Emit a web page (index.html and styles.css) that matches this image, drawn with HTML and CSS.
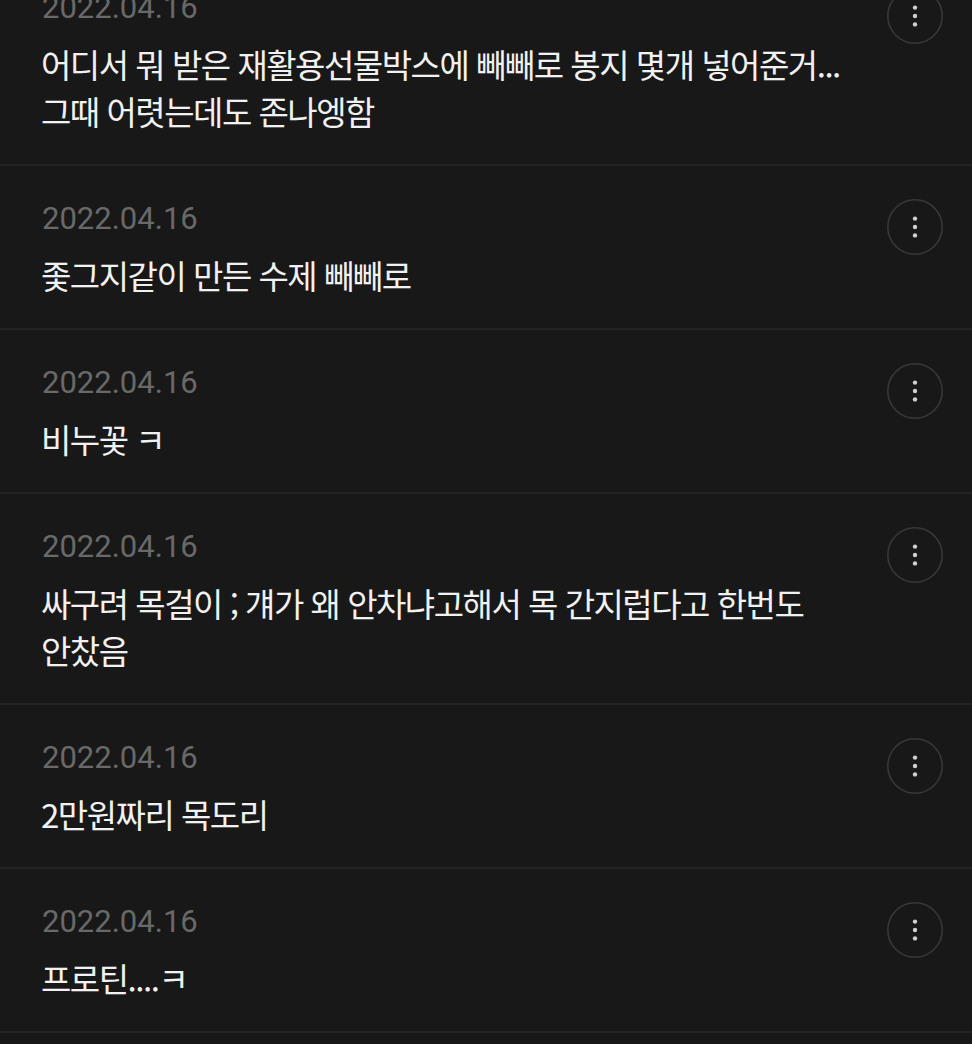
FILE: index.html
```html
<!DOCTYPE html>
<html lang="ko">
<head>
<meta charset="utf-8">
<title>댓글</title>
<link rel="stylesheet" href="styles.css">
</head>
<body>
<ul class="list">
  <li class="item">
    <div class="body">
      <div class="date">2022.04.16</div>
      <p class="text">어디서 뭐 받은 재활용선물박스에 빼빼로 봉지 몇개 넣어준거... 그때 어렷는데도 존나엥함</p>
    </div>
    <button class="more" aria-label="더보기"><svg width="56" height="56" viewBox="0 0 56 56"><circle cx="28" cy="28" r="27.2" fill="none" stroke="#383838" stroke-width="1.6"/><circle cx="28" cy="19.6" r="2.2" fill="#cfcfcf"/><circle cx="28" cy="28" r="2.2" fill="#cfcfcf"/><circle cx="28" cy="36.4" r="2.2" fill="#cfcfcf"/></svg></button>
  </li>
  <li class="item">
    <div class="body">
      <div class="date">2022.04.16</div>
      <p class="text">좇그지같이 만든 수제 빼빼로</p>
    </div>
    <button class="more" aria-label="더보기"><svg width="56" height="56" viewBox="0 0 56 56"><circle cx="28" cy="28" r="27.2" fill="none" stroke="#383838" stroke-width="1.6"/><circle cx="28" cy="19.6" r="2.2" fill="#cfcfcf"/><circle cx="28" cy="28" r="2.2" fill="#cfcfcf"/><circle cx="28" cy="36.4" r="2.2" fill="#cfcfcf"/></svg></button>
  </li>
  <li class="item">
    <div class="body">
      <div class="date">2022.04.16</div>
      <p class="text">비누꽃 ㅋ</p>
    </div>
    <button class="more" aria-label="더보기"><svg width="56" height="56" viewBox="0 0 56 56"><circle cx="28" cy="28" r="27.2" fill="none" stroke="#383838" stroke-width="1.6"/><circle cx="28" cy="19.6" r="2.2" fill="#cfcfcf"/><circle cx="28" cy="28" r="2.2" fill="#cfcfcf"/><circle cx="28" cy="36.4" r="2.2" fill="#cfcfcf"/></svg></button>
  </li>
  <li class="item">
    <div class="body">
      <div class="date">2022.04.16</div>
      <p class="text">싸구려 목걸이 ; 걔가 왜 안차냐고해서 목 간지럽다고 한번도 안찼음</p>
    </div>
    <button class="more" aria-label="더보기"><svg width="56" height="56" viewBox="0 0 56 56"><circle cx="28" cy="28" r="27.2" fill="none" stroke="#383838" stroke-width="1.6"/><circle cx="28" cy="19.6" r="2.2" fill="#cfcfcf"/><circle cx="28" cy="28" r="2.2" fill="#cfcfcf"/><circle cx="28" cy="36.4" r="2.2" fill="#cfcfcf"/></svg></button>
  </li>
  <li class="item">
    <div class="body">
      <div class="date">2022.04.16</div>
      <p class="text">2만원짜리 목도리</p>
    </div>
    <button class="more" aria-label="더보기"><svg width="56" height="56" viewBox="0 0 56 56"><circle cx="28" cy="28" r="27.2" fill="none" stroke="#383838" stroke-width="1.6"/><circle cx="28" cy="19.6" r="2.2" fill="#cfcfcf"/><circle cx="28" cy="28" r="2.2" fill="#cfcfcf"/><circle cx="28" cy="36.4" r="2.2" fill="#cfcfcf"/></svg></button>
  </li>
  <li class="item">
    <div class="body">
      <div class="date">2022.04.16</div>
      <p class="text">프로틴....ㅋ</p>
    </div>
    <button class="more" aria-label="더보기"><svg width="56" height="56" viewBox="0 0 56 56"><circle cx="28" cy="28" r="27.2" fill="none" stroke="#383838" stroke-width="1.6"/><circle cx="28" cy="19.6" r="2.2" fill="#cfcfcf"/><circle cx="28" cy="28" r="2.2" fill="#cfcfcf"/><circle cx="28" cy="36.4" r="2.2" fill="#cfcfcf"/></svg></button>
  </li>
</ul>
</body>
</html>
```

FILE: styles.css
```css
html, body {
  margin: 0;
  padding: 0;
  background: #181818;
}
body {
  overflow: hidden;
  height: 1044px;
  font-family: "Noto Sans CJK KR", "Noto Sans", sans-serif;
}
.list {
  list-style: none;
  margin: -45px 0 0;
  padding: 0;
}
.item {
  display: flex;
  align-items: flex-start;
  padding: 33px 29px 29px 41px;
  border-bottom: 2px solid #232323;
}
.body {
  flex: 1;
  min-width: 0;
}
.date {
  font-family: Roboto, "Noto Sans", sans-serif;
  font-size: 31px;
  line-height: 40px;
  color: #696969;
  padding-left: 1px;
}
.text {
  margin: 13px 0 0;
  font-size: 33px;
  line-height: 47px;
  letter-spacing: -1.5px;
  color: #f1f1f1;
  word-break: keep-all;
}
.more {
  flex: none;
  width: 56px;
  height: 56px;
  padding: 0;
  border: 0;
  background: none;
  display: block;
}
.more svg {
  display: block;
}
```
